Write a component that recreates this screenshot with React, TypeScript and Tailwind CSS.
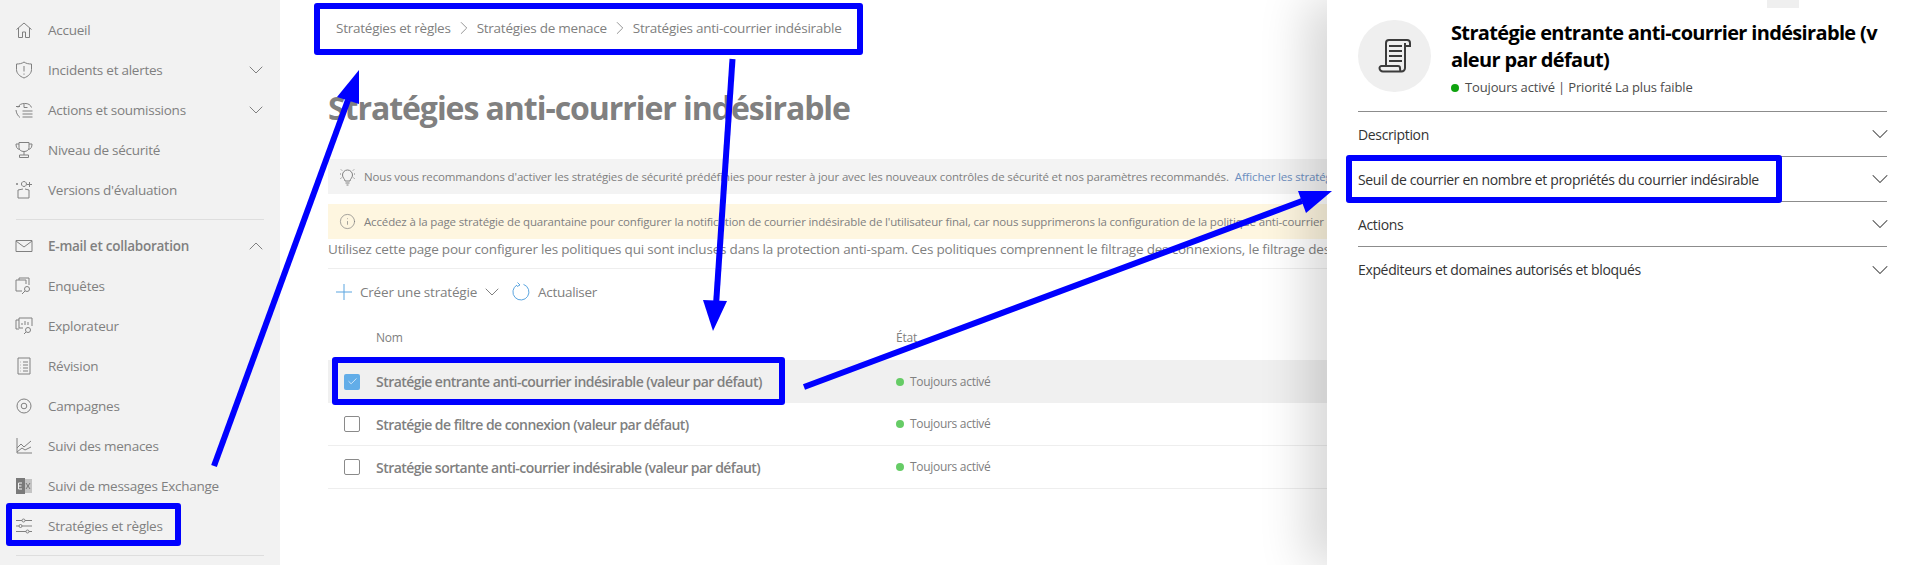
import { ChevronDown, ChevronUp, ChevronRight, Info, Check } from "lucide-react";
import type { ReactNode } from "react";

const stroke = {
  fill: "none",
  stroke: "currentColor",
  strokeWidth: 1,
};

function Icon({ children }: { children: ReactNode }) {
  return (
    <svg width="18" height="18" viewBox="0 0 18 18" {...stroke} className="shrink-0 -ml-px">
      {children}
    </svg>
  );
}

const HomeIcon = () => (
  <Icon>
    <path d="M1.500 8.500 9 2l7.500 6.500M3.500 7v9.500h4V11h3v5.500h4V7" />
  </Icon>
);
const ShieldIcon = () => (
  <Icon>
    <path d="M9 1c2 1.500 4.500 2 7.500 2v5.500c0 4-3.200 6.800-7.500 8.500-4.300-1.700-7.500-4.500-7.500-8.500V3C4.500 3 7 2.500 9 1Z" />
    <path d="M9 5v5.500M9 12.500v1.200" />
  </Icon>
);
const ActionsIcon = () => (
  <Icon>
    <path d="M3 6.500a7 5.500 0 0 1 13.500 0M1 5.500h4M9 3v3.500h3.500M1 9c.3 3 1.500 5.500 4 7.500M7.500 10h10M7.500 13h10M7.500 16h10" />
  </Icon>
);
const TrophyIcon = () => (
  <Icon>
    <path d="M4 1.500h10v5c0 2.500-2 4-5 4s-5-1.500-5-4v-5ZM4 3H1c0 3 1 5 3.500 5.500M14 3h3c0 3-1 5-3.500 5.500M9 10.500V14M4.500 16.500h9V14h-9v2.500Z" />
  </Icon>
);
const TrialIcon = () => (
  <Icon>
    <path d="M3 9v8h11V9M3 9l5-1M14 9l-4-1M1 3h2M2 2v2M9 .5a2.500 2.500 0 1 1-.1 0ZM14.500 1v5M12 3.500h5" />
  </Icon>
);
const MailIcon = () => (
  <Icon>
    <path d="M1 3.500h16v11H1v-11ZM1 4l8 6 8-6" />
  </Icon>
);
const InvestigateIcon = () => (
  <Icon>
    <path d="M7 14H1V3h3V1h10v7M4 3h7v4" />
    <circle cx="12" cy="12" r="2.500" />
    <path d="m10 14-3 3" />
  </Icon>
);
const ExplorerIcon = () => (
  <Icon>
    <path d="M4 12H1V3h3M4 1h13v8M4 1v10h4M7 8V6M10 8V4M13 8V5" />
    <circle cx="13" cy="13" r="2.500" />
    <path d="m11 15-2 2" />
  </Icon>
);
const ReviewIcon = () => (
  <Icon>
    <path d="M3 1h12v16H3V1ZM5.500 5H6M8 5h5M5.500 8H6M8 8h5M5.500 11H6M8 11h5M5.500 14H6M8 14h5" />
  </Icon>
);
const CampaignIcon = () => (
  <Icon>
    <circle cx="9" cy="9" r="7" />
    <circle cx="9" cy="9" r="2.800" />
  </Icon>
);
const ChartIcon = () => (
  <Icon>
    <path d="M2 1v15h15M2 11l4-4 3 3 7-6M2 15l5-4 3 2 6-3" />
  </Icon>
);
const ExchangeIcon = () => (
  <svg width="18" height="18" viewBox="0 0 18 18" className="shrink-0 -ml-px">
    <rect x="6" y="2" width="11" height="14" fill="#c4c4c4" />
    <path d="M11 6l4 6M15 6l-4 6" stroke="#777" fill="none" />
    <rect x="1" y="1" width="9" height="16" fill="#7a7a7a" />
    <path d="M3.500 6h3.500M3.500 9h3M3.500 12h3.500M3.500 6v6" stroke="#f2f2f2" fill="none" />
  </svg>
);
const PolicyIcon = () => (
  <Icon>
    <path d="M1 3.500h6M10 3.500h7M1 9h3M7 9h10M1 14.500h10M14 14.500h3" />
    <circle cx="8.500" cy="3.500" r="1.500" />
    <circle cx="5.500" cy="9" r="1.500" />
    <circle cx="12.500" cy="14.500" r="1.500" />
  </Icon>
);

type NavItem = { label: string; icon: ReactNode; chevron?: "down" | "up"; bold?: boolean };

const topNav: NavItem[] = [
  { label: "Accueil", icon: <HomeIcon /> },
  { label: "Incidents et alertes", icon: <ShieldIcon />, chevron: "down" },
  { label: "Actions et soumissions", icon: <ActionsIcon />, chevron: "down" },
  { label: "Niveau de sécurité", icon: <TrophyIcon /> },
  { label: "Versions d'évaluation", icon: <TrialIcon /> },
];

const mailNav: NavItem[] = [
  { label: "E-mail et collaboration", icon: <MailIcon />, chevron: "up", bold: true },
  { label: "Enquêtes", icon: <InvestigateIcon /> },
  { label: "Explorateur", icon: <ExplorerIcon /> },
  { label: "Révision", icon: <ReviewIcon /> },
  { label: "Campagnes", icon: <CampaignIcon /> },
  { label: "Suivi des menaces", icon: <ChartIcon /> },
  { label: "Suivi de messages Exchange", icon: <ExchangeIcon /> },
  { label: "Stratégies et règles", icon: <PolicyIcon /> },
];

function NavRow({ item }: { item: NavItem }) {
  return (
    <div className="h-10 flex items-center pl-4 pr-3 text-[#808080]">
      <span className="w-8 flex shrink-0">{item.icon}</span>
      <span className={"flex-1 text-[13.5px] tracking-[-0.25px] " + (item.bold ? "font-semibold" : "")}>{item.label}</span>
      {item.chevron === "down" && <ChevronDown size={24} strokeWidth={1} />}
      {item.chevron === "up" && <ChevronUp size={24} strokeWidth={1} />}
    </div>
  );
}

const policies = [
  "Stratégie entrante anti-courrier indésirable (valeur par défaut)",
  "Stratégie de filtre de connexion (valeur par défaut)",
  "Stratégie sortante anti-courrier indésirable (valeur par défaut)",
];

const sections = [
  "Description",
  "Seuil de courrier en nombre et propriétés du courrier indésirable",
  "Actions",
  "Expéditeurs et domaines autorisés et bloqués",
];

export default function App() {
  return (
    <div
      className="relative flex w-[1912px] h-[565px] overflow-hidden bg-white"
      style={{ fontFamily: '"Open Sans", "Noto Sans", sans-serif' }}
    >
      <aside className="w-[280px] shrink-0 bg-[#f2f2f2] pt-[10px]">
        {topNav.map((item) => (
          <NavRow key={item.label} item={item} />
        ))}
        <div className="h-px bg-[#dedede] mx-4 mt-[9px] mb-[6px]"></div>
        {mailNav.map((item) => (
          <NavRow key={item.label} item={item} />
        ))}
        <div className="h-px bg-[#dedede] mx-4 mt-[9px]"></div>
      </aside>

      <main className="flex-1 min-w-0 pl-[48px] text-[#808080]">
        <div className="flex items-center h-5 mt-[18px] pl-2 text-[13.5px] tracking-[-0.25px] text-[#808080]">
          <span>Stratégies et règles</span>
          <ChevronRight size={22} strokeWidth={0.9} className="mx-[2px]" />
          <span>Stratégies de menace</span>
          <ChevronRight size={22} strokeWidth={0.9} className="mx-[2px]" />
          <span>Stratégies anti-courrier indésirable</span>
        </div>

        <h1 className="mt-[50px] h-10 flex items-center text-[32px] font-bold tracking-[-1.05px] whitespace-nowrap text-[#808080]">
          Stratégies anti-courrier indésirable
        </h1>

        <div className="mt-[31px] h-[35px] bg-[#f3f3f3] flex items-center pl-[11px] text-[11.5px] tracking-[-0.15px] whitespace-nowrap overflow-hidden">
          <svg width="17" height="18" viewBox="0 0 17 18" {...stroke} className="shrink-0 mr-[8px]">
            <path d="M6 13c0-2-2.500-3-2.500-6a5 5 0 0 1 10 0c0 3-2.500 4-2.500 6H6ZM6.500 15h4M7.500 17h2M1 6h1M15 6h1M2 1.500l1 1M15 1.500l-1 1M1.500 10.500l1-.7M15.500 10.500l-1-.7" />
          </svg>
          <span>
            Nous vous recommandons d'activer les stratégies de sécurité prédéfinies pour rester à jour avec les nouveaux
            contrôles de sécurité et nos paramètres recommandés.
          </span>
          <span className="ml-[6px] text-[#6c8ebf]">Afficher les stratégies de sécurité prédéfinies</span>
        </div>

        <div className="mt-[10px] h-[35px] bg-[#fef6e0] flex items-center pl-[11px] text-[11.5px] tracking-[-0.15px] whitespace-nowrap overflow-hidden">
          <Info size={17} strokeWidth={1} className="shrink-0 mr-[8px]" />
          <span>
            Accédez à la page stratégie de quarantaine pour configurer la notification de courrier indésirable de
            l'utilisateur final, car nous supprimerons la configuration de la politique anti-courrier indésirable.
          </span>
        </div>

        <div className="h-[30px] border-b border-[#eeeeee] leading-5 text-[13.5px] tracking-[-0.19px] whitespace-nowrap overflow-hidden">
          Utilisez cette page pour configurer les politiques qui sont incluses dans la protection anti-spam. Ces
          politiques comprennent le filtrage des connexions, le filtrage des logiciels malveillants.
        </div>

        <div className="mt-[13px] h-5 flex items-center pl-2 text-[13.5px] tracking-[-0.2px]">
          <svg width="16" height="16" viewBox="0 0 16 16" stroke="#5aa5e0" fill="none" className="mr-2 shrink-0">
            <path d="M8 0v16M0 8h16" />
          </svg>
          <span>Créer une stratégie</span>
          <ChevronDown size={24} strokeWidth={1} className="ml-[3px] mr-[7px] shrink-0" />
          <svg width="20" height="20" viewBox="0 0 20 20" stroke="#5aa5e0" fill="none" className="mr-[7px] shrink-0">
            <path d="M12.500 2.400A8 8 0 1 1 6 3M6.500 .5 9 3l-3 1.500" />
          </svg>
          <span className="tracking-[-0.3px]">Actualiser</span>
        </div>

        <div className="mt-[25px] mb-[11px] h-[22px] flex items-center text-[12px] tracking-[-0.2px]">
          <span className="w-[568px] pl-[48px]">Nom</span>
          <span>État</span>
        </div>

        {policies.map((name, i) => (
          <div
            key={name}
            className={
              "h-[43px] flex items-center text-[14px] " +
              (i === 0 ? "bg-[#f0f0f0]" : "border-b border-[#eeeeee]")
            }
          >
            <span className="w-[48px] pl-4 shrink-0">
              {i === 0 ? (
                <span className="w-4 h-4 rounded-[2px] bg-[#62ade8] flex items-center justify-center">
                  <Check size={11} strokeWidth={1.5} className="text-white" />
                </span>
              ) : (
                <span className="block w-4 h-4 rounded-[2px] border border-[#8a8a8a]"></span>
              )}
            </span>
            <span className="w-[520px] shrink-0 font-semibold tracking-[-0.55px] whitespace-nowrap">{name}</span>
            <span className="w-2 h-2 rounded-full bg-[#66cc66] shrink-0 mr-[6px]"></span>
            <span className="text-[12px] tracking-[-0.3px]">Toujours activé</span>
          </div>
        ))}
      </main>

      {/* detail panel */}
      <div className="absolute top-0 right-0 bottom-0 w-[585px] bg-white pl-[31px] pr-[25px] shadow-[-20px_0_45px_rgba(0,0,0,0.16)]">
        <div className="absolute top-0 left-[440px] w-8 h-2 bg-[#efefef]"></div>
        <div className="h-[112px] border-b border-[#8c8c8c] flex pt-5">
          <div className="w-[73px] h-[72px] rounded-full bg-[#efefef] flex items-center justify-center shrink-0">
            <svg width="34" height="36" viewBox="0 0 34 36" fill="none" stroke="#3c3c3c" strokeWidth="2">
              <path d="M8 28V5a3 3 0 0 1 3-3h18a3 3 0 0 1 3 3v3h-5" />
              <path d="M27 5v25a3.500 3.500 0 0 1-3.500 3.500H5A3.500 3.500 0 0 1 1.500 30a2 2 0 0 1 2-2H20a2 2 0 0 1 2 2c0 2 .5 3.500 1.500 3.500" />
              <path d="M11 8h13M11 13h13M11 18h13M11 23h13" />
            </svg>
          </div>
          <div className="ml-5">
            <div className="text-[20px] leading-[27px] font-bold tracking-[-0.66px] text-black whitespace-nowrap -mt-px">
              <div>Stratégie entrante anti-courrier indésirable (v</div>
              <div>aleur par défaut)</div>
            </div>
            <div className="mt-[5px] flex items-center text-[13px] tracking-[-0.15px] text-[#4c4c4c]">
              <span className="w-2 h-2 rounded-full bg-[#0fa30f] mr-[6px]"></span>
              Toujours activé | Priorité La plus faible
            </div>
          </div>
        </div>
        {sections.map((title, i) => (
          <div
            key={title}
            className={
              "h-[45px] flex items-center justify-between text-[14px] font-medium tracking-[-0.35px] text-[#333333] " +
              (i < 3 ? "border-b border-[#8c8c8c]" : "")
            }
          >
            <span>{title}</span>
            <ChevronDown size={28} strokeWidth={0.9} className="-mr-[7px] text-[#444444]" />
          </div>
        ))}
      </div>

      {/* annotation boxes */}
      <div className="absolute left-[6px] top-[503px] w-[175px] h-[43px] border-[6px] border-[#0000ff] rounded-[3px]"></div>
      <div className="absolute left-[314px] top-[3px] w-[549px] h-[52px] border-[6px] border-[#0000ff] rounded-[3px]"></div>
      <div className="absolute left-[332px] top-[357px] w-[453px] h-[48px] border-[6px] border-[#0000ff] rounded-[3px]"></div>
      <div className="absolute left-[1346px] top-[155px] w-[436px] h-[48px] border-[6px] border-[#0000ff] rounded-[3px]"></div>

      {/* annotation arrows */}
      <svg className="absolute inset-0 pointer-events-none" width="1912" height="565" viewBox="0 0 1912 565">
        <path d="M214 466 348 100" stroke="#0000ff" strokeWidth="6" fill="none" />
        <path d="M359 70 337 97 359 104Z" fill="#0000ff" />
        <path d="M732.500 59 716 305" stroke="#0000ff" strokeWidth="6" fill="none" />
        <path d="M713 331 703 300 727 301Z" fill="#0000ff" />
        <path d="M804 387 1302 201" stroke="#0000ff" strokeWidth="6" fill="none" />
        <path d="M1332 191 1298 191 1306 213Z" fill="#0000ff" />
      </svg>
    </div>
  );
}
